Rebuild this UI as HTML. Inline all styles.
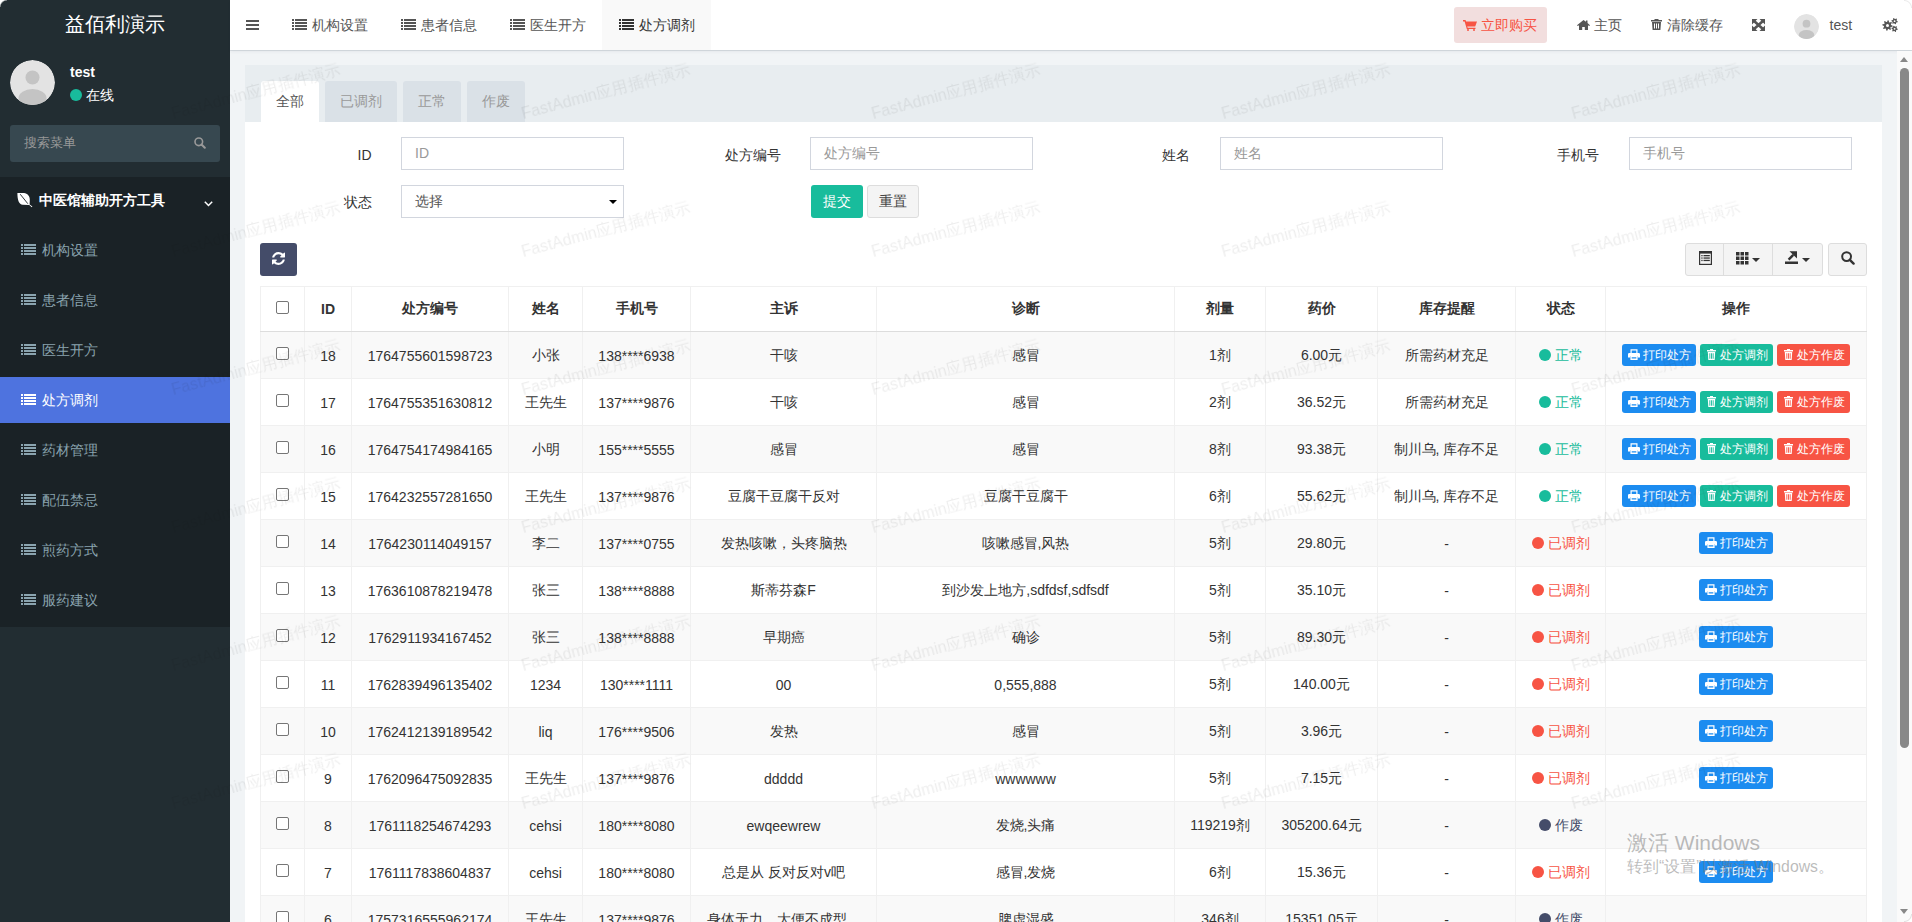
<!DOCTYPE html><html><head><meta charset="utf-8"><style>
*{box-sizing:border-box;margin:0;padding:0}
html,body{width:1912px;height:922px;overflow:hidden;background:#f1f4f6;font-family:"Liberation Sans",sans-serif;font-size:14px;color:#333}
div,span{position:absolute}
.il{position:relative;display:inline-block}
#side{left:0;top:0;width:230px;height:922px;background:#222d32}
#logo{left:0;top:0;width:230px;height:50px;color:#fff;font-size:20px;text-align:center;line-height:48px}
#menu{left:0;top:177px;width:230px;height:450px;background:#1a2226}
.mi{left:0;width:230px;height:46px;line-height:46px;color:#8aa4af;padding-left:42px;font-size:14px}
.mi.act{background:#4e73df;color:#fff}
.mi svg{position:absolute;left:21px;top:17px}
#hdr{left:230px;top:0;width:1682px;height:50px;background:#fff;box-shadow:0 1px 0 rgba(0,25,50,.1),0 2px 3px rgba(0,25,50,.05)}
.tab{top:0;height:50px;line-height:50px;color:#555;font-size:14px;white-space:nowrap}
.tab svg{position:absolute;top:19px;left:17px}
#scroll{left:1897px;top:51px;width:15px;height:871px;background:#fafafa}
.ph{left:245px;top:65px;width:1637px;height:57px;background:#e8edf0}
.pb{left:245px;top:122px;width:1637px;height:800px;background:#fff}
.ptab{top:81px;height:41px;line-height:41px;text-align:center;font-size:14px;border-radius:3px 3px 0 0;background:#dae1e7;color:#999}
.ptab.act{background:#fff;color:#555}
.lbl{font-size:14px;color:#333;text-align:right;line-height:20px;white-space:nowrap}
.inp{height:33px;width:223px;border:1px solid #d2d6de;background:#fff;font-size:14px;color:#999;line-height:31px;padding-left:13px;white-space:nowrap}
.btn{border-radius:3px;text-align:center;font-size:14px}
.tbg{background:#f4f4f4;border:1px solid #ddd;border-radius:3px}
.tbsep{width:1px;height:33px;background:#ddd}
table{position:absolute;left:260px;top:286px;border-collapse:collapse;table-layout:fixed;width:1606px;font-size:14px;color:#333}
th,td{border:1px solid #f0f0f0;text-align:center;white-space:nowrap;overflow:hidden;padding:0}
th{height:45px;font-weight:bold;border-bottom:1px solid #ddd;background:#fff;color:#333}
td{height:47px;padding-top:1px}
tbody tr:nth-child(odd) td{background:#f9f9f9}
tbody tr:nth-child(even) td{background:#fff}
td span,th span{position:relative}
.cb{display:inline-block;width:13px;height:13px;border:1px solid #767676;border-radius:2px;background:#fff;vertical-align:middle;position:relative;top:-3px}
.st{display:inline-block;width:12px;height:12px;border-radius:6px;vertical-align:middle;position:relative;top:-1px;margin-right:4px}
.stt{position:relative;top:0}
.bx{display:inline-block;position:relative;top:-1px;height:22px;line-height:20px;font-size:12px;color:#fff;border-radius:3px;padding:1px 0 1px 6px;vertical-align:middle;margin:0 2px;text-align:left}
.bx svg{vertical-align:middle;position:relative;top:-1px;margin-right:3px}
.bp{width:74px}.bt{width:73px;padding-left:6.5px}.bt svg{margin-right:4px}
.info{background:#1c8cf0}
.succ{background:#18bc9c}
.dang{background:#f75444}
.wm{font-size:16px;color:rgba(0,0,0,.07);will-change:transform;letter-spacing:.1px;transform-origin:0 100%;transform:rotate(-15deg);white-space:nowrap;line-height:16px;pointer-events:none}
.caret{width:0;height:0;border-left:4px solid transparent;border-right:4px solid transparent;border-top:4px solid #000}
</style></head><body><div class="ph"></div><div class="pb"></div>
<div class="ptab act" style="left:261px;width:58px">全部</div>
<div class="ptab" style="left:325px;width:72px">已调剂</div>
<div class="ptab" style="left:403px;width:58px">正常</div>
<div class="ptab" style="left:467px;width:58px">作废</div>
<div class="lbl" style="left:160.00px;width:211.50px;top:145px">ID</div>
<div class="inp" style="left:401.00px;top:137px">ID</div>
<div class="lbl" style="left:569.25px;width:211.50px;top:145px">处方编号</div>
<div class="inp" style="left:810.25px;top:137px">处方编号</div>
<div class="lbl" style="left:978.50px;width:211.50px;top:145px">姓名</div>
<div class="inp" style="left:1219.50px;top:137px">姓名</div>
<div class="lbl" style="left:1387.75px;width:211.50px;top:145px">手机号</div>
<div class="inp" style="left:1628.75px;top:137px">手机号</div>
<div class="lbl" style="left:160px;width:211.5px;top:192px">状态</div>
<div class="inp" style="left:401px;top:185px;color:#555">选择<span class="caret" style="left:207px;top:14px"></span></div>
<div class="btn" style="left:811px;top:185px;width:52px;height:33px;line-height:33px;background:#18bc9c;color:#fff">提交</div>
<div class="btn" style="left:867px;top:185px;width:52px;height:33px;line-height:31px;background:#f4f4f4;border:1px solid #ddd;color:#444">重置</div>
<div class="btn" style="left:260px;top:243px;width:37px;height:33px;background:#444c69"><span style="left:12px;top:9px;line-height:0"><svg width="13" height="13" viewBox="0 0 1536 1536"><path fill="#fff" d="M1511 928q0 5-1 7-64 268-268 434.5T764 1536q-146 0-282.5-55T238 1324l-129 128q-19 19-45 19t-45-19-19-45V959q0-26 19-45t45-19h448q26 0 45 19t19 45-19 45l-137 137q71 66 161 102t187 36q134 0 250-65t186-179q11-17 53-117 8-23 30-23h192q13 0 22.5 9.5t9.5 22.5zm25-800v448q0 26-19 45t-45 19h-448q-26 0-45-19t-19-45 19-45l138-138Q969 256 768 256q-134 0-250 65T332 500q-11 17-53 117-8 23-30 23H50q-13 0-22.5-9.5T18 608v-7q65-268 270-434.5T768 0q146 0 284 55.5T1297 212l130-129q19-19 45-19t45 19 19 45z"/></svg></span></div>
<div class="tbg" style="left:1685px;top:243px;width:138px;height:33px"></div>
<div class="tbsep" style="left:1723px;top:243px"></div><div class="tbsep" style="left:1772px;top:243px"></div>
<div class="tbg" style="left:1828px;top:243px;width:39px;height:33px"></div>
<span style="left:1698.5px;top:250.5px;line-height:0"><svg width="13" height="14" viewBox="0 0 13 14"><rect x="0.6" y="0.6" width="11.8" height="12.8" fill="none" stroke="#333" stroke-width="1.2"/><rect x="0.6" y="0.6" width="11.8" height="2" fill="#333"/><g fill="#333"><rect x="2.3" y="4" width="1.3" height="1.3"/><rect x="4.5" y="4" width="6.3" height="1.3"/><rect x="2.3" y="6.4" width="1.3" height="1.3"/><rect x="4.5" y="6.4" width="6.3" height="1.3"/><rect x="2.3" y="8.8" width="1.3" height="1.3"/><rect x="4.5" y="8.8" width="6.3" height="1.3"/></g></svg></span>
<span style="left:1736px;top:252px;line-height:0"><svg width="13" height="13" viewBox="0 0 13 13"><g fill="#333"><rect x="0.0" y="0.0" width="3.5" height="3.5"/><rect x="0.0" y="4.5" width="3.5" height="3.5"/><rect x="0.0" y="9.0" width="3.5" height="3.5"/><rect x="4.5" y="0.0" width="3.5" height="3.5"/><rect x="4.5" y="4.5" width="3.5" height="3.5"/><rect x="4.5" y="9.0" width="3.5" height="3.5"/><rect x="9.0" y="0.0" width="3.5" height="3.5"/><rect x="9.0" y="4.5" width="3.5" height="3.5"/><rect x="9.0" y="9.0" width="3.5" height="3.5"/></g></svg></span>
<span class="caret" style="left:1752px;top:258px;border-top-color:#333"></span>
<span style="left:1785px;top:251px;line-height:0"><svg width="13" height="13" viewBox="0 0 13 13"><rect x="0" y="10.5" width="13" height="2.5" fill="#333"/><path d="M4.5 0.3H12V7.5z" fill="#333"/><path d="M3.6 8.6L8.3 3.9" stroke="#333" stroke-width="2.4"/></svg></span>
<span class="caret" style="left:1802px;top:258px;border-top-color:#333"></span>
<span style="left:1841px;top:251px;line-height:0"><svg width="14" height="14" viewBox="0 0 14 14"><circle cx="5.6" cy="5.6" r="4.4" fill="none" stroke="#333" stroke-width="2"/><path d="M8.8 8.8l3.8 3.8" stroke="#333" stroke-width="2.4" stroke-linecap="round"/></svg></span>
<table><colgroup><col style="width:44px"><col style="width:47px"><col style="width:157px"><col style="width:74px"><col style="width:108px"><col style="width:186px"><col style="width:298px"><col style="width:91px"><col style="width:112px"><col style="width:138px"><col style="width:90px"><col style="width:261px"></colgroup><thead><tr><th><span class="cb"></span></th><th>ID</th><th>处方编号</th><th>姓名</th><th>手机号</th><th>主诉</th><th>诊断</th><th>剂量</th><th>药价</th><th>库存提醒</th><th>状态</th><th>操作</th></tr></thead><tbody>
<tr><td><span class="cb"></span></td><td>18</td><td>1764755601598723</td><td>小张</td><td>138****6938</td><td>干咳</td><td>感冒</td><td>1剂</td><td>6.00元</td><td>所需药材充足</td><td><span class="st" style="background:#18bc9c"></span><span class="stt" style="color:#18bc9c">正常</span></td><td><span class="bx bp info"><svg width="12" height="11" viewBox="0 0 12 11"><path fill="#fff" d="M2.5 0.3h7v3.7H8.3V1.5H3.7V4H2.5z"/><path fill="#fff" d="M1.2 4h9.6a1.2 1.2 0 0 1 1.2 1.2V8.6H9.6V7H2.4v1.6H0V5.2A1.2 1.2 0 0 1 1.2 4z"/><path fill="#fff" fill-rule="evenodd" d="M2.4 6.8h7.2V11H2.4z M3.7 8.3v1.3h4.6V8.3z"/></svg>打印处方</span><span class="bx bt succ"><svg width="9" height="11" viewBox="0 0 9 11"><path fill="#fff" d="M3 0h3v1h3v1.5H0V1h3z M0.8 3h7.4l-.5 8H1.3z"/><path fill="#18bc9c" d="M2.4 4.2h.9v5.6h-.9z M4.05 4.2h.9v5.6h-.9z M5.7 4.2h.9v5.6h-.9z" class="tl"/></svg>处方调剂</span><span class="bx bt dang"><svg width="9" height="11" viewBox="0 0 9 11"><path fill="#fff" d="M3 0h3v1h3v1.5H0V1h3z M0.8 3h7.4l-.5 8H1.3z"/><path fill="#f75444" d="M2.4 4.2h.9v5.6h-.9z M4.05 4.2h.9v5.6h-.9z M5.7 4.2h.9v5.6h-.9z" class="tl"/></svg>处方作废</span></td></tr>
<tr><td><span class="cb"></span></td><td>17</td><td>1764755351630812</td><td>王先生</td><td>137****9876</td><td>干咳</td><td>感冒</td><td>2剂</td><td>36.52元</td><td>所需药材充足</td><td><span class="st" style="background:#18bc9c"></span><span class="stt" style="color:#18bc9c">正常</span></td><td><span class="bx bp info"><svg width="12" height="11" viewBox="0 0 12 11"><path fill="#fff" d="M2.5 0.3h7v3.7H8.3V1.5H3.7V4H2.5z"/><path fill="#fff" d="M1.2 4h9.6a1.2 1.2 0 0 1 1.2 1.2V8.6H9.6V7H2.4v1.6H0V5.2A1.2 1.2 0 0 1 1.2 4z"/><path fill="#fff" fill-rule="evenodd" d="M2.4 6.8h7.2V11H2.4z M3.7 8.3v1.3h4.6V8.3z"/></svg>打印处方</span><span class="bx bt succ"><svg width="9" height="11" viewBox="0 0 9 11"><path fill="#fff" d="M3 0h3v1h3v1.5H0V1h3z M0.8 3h7.4l-.5 8H1.3z"/><path fill="#18bc9c" d="M2.4 4.2h.9v5.6h-.9z M4.05 4.2h.9v5.6h-.9z M5.7 4.2h.9v5.6h-.9z" class="tl"/></svg>处方调剂</span><span class="bx bt dang"><svg width="9" height="11" viewBox="0 0 9 11"><path fill="#fff" d="M3 0h3v1h3v1.5H0V1h3z M0.8 3h7.4l-.5 8H1.3z"/><path fill="#f75444" d="M2.4 4.2h.9v5.6h-.9z M4.05 4.2h.9v5.6h-.9z M5.7 4.2h.9v5.6h-.9z" class="tl"/></svg>处方作废</span></td></tr>
<tr><td><span class="cb"></span></td><td>16</td><td>1764754174984165</td><td>小明</td><td>155****5555</td><td>感冒</td><td>感冒</td><td>8剂</td><td>93.38元</td><td>制川乌, 库存不足</td><td><span class="st" style="background:#18bc9c"></span><span class="stt" style="color:#18bc9c">正常</span></td><td><span class="bx bp info"><svg width="12" height="11" viewBox="0 0 12 11"><path fill="#fff" d="M2.5 0.3h7v3.7H8.3V1.5H3.7V4H2.5z"/><path fill="#fff" d="M1.2 4h9.6a1.2 1.2 0 0 1 1.2 1.2V8.6H9.6V7H2.4v1.6H0V5.2A1.2 1.2 0 0 1 1.2 4z"/><path fill="#fff" fill-rule="evenodd" d="M2.4 6.8h7.2V11H2.4z M3.7 8.3v1.3h4.6V8.3z"/></svg>打印处方</span><span class="bx bt succ"><svg width="9" height="11" viewBox="0 0 9 11"><path fill="#fff" d="M3 0h3v1h3v1.5H0V1h3z M0.8 3h7.4l-.5 8H1.3z"/><path fill="#18bc9c" d="M2.4 4.2h.9v5.6h-.9z M4.05 4.2h.9v5.6h-.9z M5.7 4.2h.9v5.6h-.9z" class="tl"/></svg>处方调剂</span><span class="bx bt dang"><svg width="9" height="11" viewBox="0 0 9 11"><path fill="#fff" d="M3 0h3v1h3v1.5H0V1h3z M0.8 3h7.4l-.5 8H1.3z"/><path fill="#f75444" d="M2.4 4.2h.9v5.6h-.9z M4.05 4.2h.9v5.6h-.9z M5.7 4.2h.9v5.6h-.9z" class="tl"/></svg>处方作废</span></td></tr>
<tr><td><span class="cb"></span></td><td>15</td><td>1764232557281650</td><td>王先生</td><td>137****9876</td><td>豆腐干豆腐干反对</td><td>豆腐干豆腐干</td><td>6剂</td><td>55.62元</td><td>制川乌, 库存不足</td><td><span class="st" style="background:#18bc9c"></span><span class="stt" style="color:#18bc9c">正常</span></td><td><span class="bx bp info"><svg width="12" height="11" viewBox="0 0 12 11"><path fill="#fff" d="M2.5 0.3h7v3.7H8.3V1.5H3.7V4H2.5z"/><path fill="#fff" d="M1.2 4h9.6a1.2 1.2 0 0 1 1.2 1.2V8.6H9.6V7H2.4v1.6H0V5.2A1.2 1.2 0 0 1 1.2 4z"/><path fill="#fff" fill-rule="evenodd" d="M2.4 6.8h7.2V11H2.4z M3.7 8.3v1.3h4.6V8.3z"/></svg>打印处方</span><span class="bx bt succ"><svg width="9" height="11" viewBox="0 0 9 11"><path fill="#fff" d="M3 0h3v1h3v1.5H0V1h3z M0.8 3h7.4l-.5 8H1.3z"/><path fill="#18bc9c" d="M2.4 4.2h.9v5.6h-.9z M4.05 4.2h.9v5.6h-.9z M5.7 4.2h.9v5.6h-.9z" class="tl"/></svg>处方调剂</span><span class="bx bt dang"><svg width="9" height="11" viewBox="0 0 9 11"><path fill="#fff" d="M3 0h3v1h3v1.5H0V1h3z M0.8 3h7.4l-.5 8H1.3z"/><path fill="#f75444" d="M2.4 4.2h.9v5.6h-.9z M4.05 4.2h.9v5.6h-.9z M5.7 4.2h.9v5.6h-.9z" class="tl"/></svg>处方作废</span></td></tr>
<tr><td><span class="cb"></span></td><td>14</td><td>1764230114049157</td><td>李二</td><td>137****0755</td><td>发热咳嗽，头疼脑热</td><td>咳嗽感冒,风热</td><td>5剂</td><td>29.80元</td><td>-</td><td><span class="st" style="background:#f75444"></span><span class="stt" style="color:#f75444">已调剂</span></td><td><span class="bx bp info"><svg width="12" height="11" viewBox="0 0 12 11"><path fill="#fff" d="M2.5 0.3h7v3.7H8.3V1.5H3.7V4H2.5z"/><path fill="#fff" d="M1.2 4h9.6a1.2 1.2 0 0 1 1.2 1.2V8.6H9.6V7H2.4v1.6H0V5.2A1.2 1.2 0 0 1 1.2 4z"/><path fill="#fff" fill-rule="evenodd" d="M2.4 6.8h7.2V11H2.4z M3.7 8.3v1.3h4.6V8.3z"/></svg>打印处方</span></td></tr>
<tr><td><span class="cb"></span></td><td>13</td><td>1763610878219478</td><td>张三</td><td>138****8888</td><td>斯蒂芬森F</td><td>到沙发上地方,sdfdsf,sdfsdf</td><td>5剂</td><td>35.10元</td><td>-</td><td><span class="st" style="background:#f75444"></span><span class="stt" style="color:#f75444">已调剂</span></td><td><span class="bx bp info"><svg width="12" height="11" viewBox="0 0 12 11"><path fill="#fff" d="M2.5 0.3h7v3.7H8.3V1.5H3.7V4H2.5z"/><path fill="#fff" d="M1.2 4h9.6a1.2 1.2 0 0 1 1.2 1.2V8.6H9.6V7H2.4v1.6H0V5.2A1.2 1.2 0 0 1 1.2 4z"/><path fill="#fff" fill-rule="evenodd" d="M2.4 6.8h7.2V11H2.4z M3.7 8.3v1.3h4.6V8.3z"/></svg>打印处方</span></td></tr>
<tr><td><span class="cb"></span></td><td>12</td><td>1762911934167452</td><td>张三</td><td>138****8888</td><td>早期癌</td><td>确诊</td><td>5剂</td><td>89.30元</td><td>-</td><td><span class="st" style="background:#f75444"></span><span class="stt" style="color:#f75444">已调剂</span></td><td><span class="bx bp info"><svg width="12" height="11" viewBox="0 0 12 11"><path fill="#fff" d="M2.5 0.3h7v3.7H8.3V1.5H3.7V4H2.5z"/><path fill="#fff" d="M1.2 4h9.6a1.2 1.2 0 0 1 1.2 1.2V8.6H9.6V7H2.4v1.6H0V5.2A1.2 1.2 0 0 1 1.2 4z"/><path fill="#fff" fill-rule="evenodd" d="M2.4 6.8h7.2V11H2.4z M3.7 8.3v1.3h4.6V8.3z"/></svg>打印处方</span></td></tr>
<tr><td><span class="cb"></span></td><td>11</td><td>1762839496135402</td><td>1234</td><td>130****1111</td><td>00</td><td>0,555,888</td><td>5剂</td><td>140.00元</td><td>-</td><td><span class="st" style="background:#f75444"></span><span class="stt" style="color:#f75444">已调剂</span></td><td><span class="bx bp info"><svg width="12" height="11" viewBox="0 0 12 11"><path fill="#fff" d="M2.5 0.3h7v3.7H8.3V1.5H3.7V4H2.5z"/><path fill="#fff" d="M1.2 4h9.6a1.2 1.2 0 0 1 1.2 1.2V8.6H9.6V7H2.4v1.6H0V5.2A1.2 1.2 0 0 1 1.2 4z"/><path fill="#fff" fill-rule="evenodd" d="M2.4 6.8h7.2V11H2.4z M3.7 8.3v1.3h4.6V8.3z"/></svg>打印处方</span></td></tr>
<tr><td><span class="cb"></span></td><td>10</td><td>1762412139189542</td><td>liq</td><td>176****9506</td><td>发热</td><td>感冒</td><td>5剂</td><td>3.96元</td><td>-</td><td><span class="st" style="background:#f75444"></span><span class="stt" style="color:#f75444">已调剂</span></td><td><span class="bx bp info"><svg width="12" height="11" viewBox="0 0 12 11"><path fill="#fff" d="M2.5 0.3h7v3.7H8.3V1.5H3.7V4H2.5z"/><path fill="#fff" d="M1.2 4h9.6a1.2 1.2 0 0 1 1.2 1.2V8.6H9.6V7H2.4v1.6H0V5.2A1.2 1.2 0 0 1 1.2 4z"/><path fill="#fff" fill-rule="evenodd" d="M2.4 6.8h7.2V11H2.4z M3.7 8.3v1.3h4.6V8.3z"/></svg>打印处方</span></td></tr>
<tr><td><span class="cb"></span></td><td>9</td><td>1762096475092835</td><td>王先生</td><td>137****9876</td><td>ddddd</td><td>wwwwww</td><td>5剂</td><td>7.15元</td><td>-</td><td><span class="st" style="background:#f75444"></span><span class="stt" style="color:#f75444">已调剂</span></td><td><span class="bx bp info"><svg width="12" height="11" viewBox="0 0 12 11"><path fill="#fff" d="M2.5 0.3h7v3.7H8.3V1.5H3.7V4H2.5z"/><path fill="#fff" d="M1.2 4h9.6a1.2 1.2 0 0 1 1.2 1.2V8.6H9.6V7H2.4v1.6H0V5.2A1.2 1.2 0 0 1 1.2 4z"/><path fill="#fff" fill-rule="evenodd" d="M2.4 6.8h7.2V11H2.4z M3.7 8.3v1.3h4.6V8.3z"/></svg>打印处方</span></td></tr>
<tr><td><span class="cb"></span></td><td>8</td><td>1761118254674293</td><td>cehsi</td><td>180****8080</td><td>ewqeewrew</td><td>发烧,头痛</td><td>119219剂</td><td>305200.64元</td><td>-</td><td><span class="st" style="background:#444c69"></span><span class="stt" style="color:#444c69">作废</span></td><td></td></tr>
<tr><td><span class="cb"></span></td><td>7</td><td>1761117838604837</td><td>cehsi</td><td>180****8080</td><td>总是从 反对反对v吧</td><td>感冒,发烧</td><td>6剂</td><td>15.36元</td><td>-</td><td><span class="st" style="background:#f75444"></span><span class="stt" style="color:#f75444">已调剂</span></td><td><span class="bx bp info"><svg width="12" height="11" viewBox="0 0 12 11"><path fill="#fff" d="M2.5 0.3h7v3.7H8.3V1.5H3.7V4H2.5z"/><path fill="#fff" d="M1.2 4h9.6a1.2 1.2 0 0 1 1.2 1.2V8.6H9.6V7H2.4v1.6H0V5.2A1.2 1.2 0 0 1 1.2 4z"/><path fill="#fff" fill-rule="evenodd" d="M2.4 6.8h7.2V11H2.4z M3.7 8.3v1.3h4.6V8.3z"/></svg>打印处方</span></td></tr>
<tr><td><span class="cb"></span></td><td>6</td><td>1757316555962174</td><td>王先生</td><td>137****9876</td><td>身体无力，大便不成型。</td><td>脾虚湿盛</td><td>346剂</td><td>15351.05元</td><td>-</td><td><span class="st" style="background:#444c69"></span><span class="stt" style="color:#444c69">作废</span></td><td></td></tr>
</tbody></table>
<div style="left:1627px;top:831px;font-size:21px;color:rgba(120,120,120,.5);white-space:nowrap;line-height:24px">激活 Windows</div>
<div style="left:1627px;top:858px;font-size:15.8px;color:rgba(120,120,120,.5);white-space:nowrap;line-height:18px">转到“设置”以激活 Windows。</div>
<div id="side"><div id="logo">益佰利演示</div><span style="left:10px;top:60px;line-height:0;border-radius:50%;overflow:hidden;width:45px;height:45px"><svg width="45" height="45" viewBox="0 0 45 45"><circle cx="22.5" cy="22.5" r="22.5" fill="#e3e3e3"/><circle cx="22.5" cy="17.5" r="7" fill="#c4c4c4"/><ellipse cx="22.5" cy="38" rx="14" ry="9" fill="#c4c4c4"/></svg></span><div style="left:70px;top:63px;color:#fff;font-weight:bold;font-size:14px;line-height:18px">test</div><span style="left:70px;top:89px;width:12px;height:12px;border-radius:6px;background:#18bc9c"></span><div style="left:86px;top:86px;color:#fff;font-size:14px;line-height:18px">在线</div><div style="left:10px;top:125px;width:210px;height:37px;background:#374850;border-radius:3px"></div><div style="left:24px;top:134px;color:#999;font-size:13px;line-height:18px">搜索菜单</div><span style="left:194px;top:137px;line-height:0"><svg width="12" height="12" viewBox="0 0 12 12"><circle cx="4.8" cy="4.8" r="3.8" fill="none" stroke="#999" stroke-width="1.6"/><path d="M7.5 7.5l3.3 3.3" stroke="#999" stroke-width="2" stroke-linecap="round"/></svg></span><div id="menu"><div style="left:39px;top:14px;color:#fff;font-weight:bold;font-size:14px;line-height:18px;white-space:nowrap">中医馆辅助开方工具</div><span style="left:17px;top:15px;line-height:0"><svg width="16" height="16" viewBox="0 0 16 16"><path fill="#fff" d="M0.4 0.9L7 1C10.5 1.5 12.8 4 12.8 7.5L12.6 12.4L15.4 14.6L14.8 15.3L12.2 13L5.7 12.7C2 12.5 0.4 8 0.4 0.9z"/><path d="M3.2 2.2L10.8 11.7" stroke="#1a2226" stroke-width="0.9"/></svg></span><span style="left:204px;top:24px;line-height:0"><svg width="9" height="6" viewBox="0 0 9 6"><path d="M.8 .8l3.7 3.7 3.7-3.7" fill="none" stroke="#fff" stroke-width="1.5"/></svg></span><div class="mi" style="top:50px"><svg width="15" height="11" viewBox="0 0 15 11"><g fill="#8aa4af"><rect x="0" y="0" width="2" height="2"/><rect x="3" y="0" width="12" height="2"/><rect x="0" y="3" width="2" height="2"/><rect x="3" y="3" width="12" height="2"/><rect x="0" y="6" width="2" height="2"/><rect x="3" y="6" width="12" height="2"/><rect x="0" y="9" width="2" height="2"/><rect x="3" y="9" width="12" height="2"/></g></svg>机构设置</div><div class="mi" style="top:100px"><svg width="15" height="11" viewBox="0 0 15 11"><g fill="#8aa4af"><rect x="0" y="0" width="2" height="2"/><rect x="3" y="0" width="12" height="2"/><rect x="0" y="3" width="2" height="2"/><rect x="3" y="3" width="12" height="2"/><rect x="0" y="6" width="2" height="2"/><rect x="3" y="6" width="12" height="2"/><rect x="0" y="9" width="2" height="2"/><rect x="3" y="9" width="12" height="2"/></g></svg>患者信息</div><div class="mi" style="top:150px"><svg width="15" height="11" viewBox="0 0 15 11"><g fill="#8aa4af"><rect x="0" y="0" width="2" height="2"/><rect x="3" y="0" width="12" height="2"/><rect x="0" y="3" width="2" height="2"/><rect x="3" y="3" width="12" height="2"/><rect x="0" y="6" width="2" height="2"/><rect x="3" y="6" width="12" height="2"/><rect x="0" y="9" width="2" height="2"/><rect x="3" y="9" width="12" height="2"/></g></svg>医生开方</div><div class="mi act" style="top:200px"><svg width="15" height="11" viewBox="0 0 15 11"><g fill="#fff"><rect x="0" y="0" width="2" height="2"/><rect x="3" y="0" width="12" height="2"/><rect x="0" y="3" width="2" height="2"/><rect x="3" y="3" width="12" height="2"/><rect x="0" y="6" width="2" height="2"/><rect x="3" y="6" width="12" height="2"/><rect x="0" y="9" width="2" height="2"/><rect x="3" y="9" width="12" height="2"/></g></svg>处方调剂</div><div class="mi" style="top:250px"><svg width="15" height="11" viewBox="0 0 15 11"><g fill="#8aa4af"><rect x="0" y="0" width="2" height="2"/><rect x="3" y="0" width="12" height="2"/><rect x="0" y="3" width="2" height="2"/><rect x="3" y="3" width="12" height="2"/><rect x="0" y="6" width="2" height="2"/><rect x="3" y="6" width="12" height="2"/><rect x="0" y="9" width="2" height="2"/><rect x="3" y="9" width="12" height="2"/></g></svg>药材管理</div><div class="mi" style="top:300px"><svg width="15" height="11" viewBox="0 0 15 11"><g fill="#8aa4af"><rect x="0" y="0" width="2" height="2"/><rect x="3" y="0" width="12" height="2"/><rect x="0" y="3" width="2" height="2"/><rect x="3" y="3" width="12" height="2"/><rect x="0" y="6" width="2" height="2"/><rect x="3" y="6" width="12" height="2"/><rect x="0" y="9" width="2" height="2"/><rect x="3" y="9" width="12" height="2"/></g></svg>配伍禁忌</div><div class="mi" style="top:350px"><svg width="15" height="11" viewBox="0 0 15 11"><g fill="#8aa4af"><rect x="0" y="0" width="2" height="2"/><rect x="3" y="0" width="12" height="2"/><rect x="0" y="3" width="2" height="2"/><rect x="3" y="3" width="12" height="2"/><rect x="0" y="6" width="2" height="2"/><rect x="3" y="6" width="12" height="2"/><rect x="0" y="9" width="2" height="2"/><rect x="3" y="9" width="12" height="2"/></g></svg>煎药方式</div><div class="mi" style="top:400px"><svg width="15" height="11" viewBox="0 0 15 11"><g fill="#8aa4af"><rect x="0" y="0" width="2" height="2"/><rect x="3" y="0" width="12" height="2"/><rect x="0" y="3" width="2" height="2"/><rect x="3" y="3" width="12" height="2"/><rect x="0" y="6" width="2" height="2"/><rect x="3" y="6" width="12" height="2"/><rect x="0" y="9" width="2" height="2"/><rect x="3" y="9" width="12" height="2"/></g></svg>服药建议</div></div></div>
<div id="hdr"><span style="left:16px;top:20px;line-height:0"><svg width="13" height="10" viewBox="0 0 13 10"><g fill="#555"><rect y="0" width="13" height="2"/><rect y="4" width="13" height="2"/><rect y="8" width="13" height="2"/></g></svg></span><div class="tab" style="left:45px;width:109px;color:#555"><svg width="15" height="11" viewBox="0 0 15 11"><g fill="#555"><rect x="0" y="0" width="2" height="2"/><rect x="3" y="0" width="12" height="2"/><rect x="0" y="3" width="2" height="2"/><rect x="3" y="3" width="12" height="2"/><rect x="0" y="6" width="2" height="2"/><rect x="3" y="6" width="12" height="2"/><rect x="0" y="9" width="2" height="2"/><rect x="3" y="9" width="12" height="2"/></g></svg><span style="left:37px;top:0">机构设置</span></div><div class="tab" style="left:154px;width:109px;color:#555"><svg width="15" height="11" viewBox="0 0 15 11"><g fill="#555"><rect x="0" y="0" width="2" height="2"/><rect x="3" y="0" width="12" height="2"/><rect x="0" y="3" width="2" height="2"/><rect x="3" y="3" width="12" height="2"/><rect x="0" y="6" width="2" height="2"/><rect x="3" y="6" width="12" height="2"/><rect x="0" y="9" width="2" height="2"/><rect x="3" y="9" width="12" height="2"/></g></svg><span style="left:37px;top:0">患者信息</span></div><div class="tab" style="left:263px;width:109px;color:#555"><svg width="15" height="11" viewBox="0 0 15 11"><g fill="#555"><rect x="0" y="0" width="2" height="2"/><rect x="3" y="0" width="12" height="2"/><rect x="0" y="3" width="2" height="2"/><rect x="3" y="3" width="12" height="2"/><rect x="0" y="6" width="2" height="2"/><rect x="3" y="6" width="12" height="2"/><rect x="0" y="9" width="2" height="2"/><rect x="3" y="9" width="12" height="2"/></g></svg><span style="left:37px;top:0">医生开方</span></div><div class="tab" style="left:372px;width:109px;background:#f9f9f9;color:#333"><svg width="15" height="11" viewBox="0 0 15 11"><g fill="#333"><rect x="0" y="0" width="2" height="2"/><rect x="3" y="0" width="12" height="2"/><rect x="0" y="3" width="2" height="2"/><rect x="3" y="3" width="12" height="2"/><rect x="0" y="6" width="2" height="2"/><rect x="3" y="6" width="12" height="2"/><rect x="0" y="9" width="2" height="2"/><rect x="3" y="9" width="12" height="2"/></g></svg><span style="left:37px;top:0">处方调剂</span></div><div style="left:1224px;top:7px;width:93px;height:36px;background:#f2dede;border-radius:3px"></div><span style="left:1233px;top:20px;line-height:0"><svg width="14" height="11" viewBox="0 0 14 11"><path fill="#f75444" d="M0 0h2.5l.6 1.5H14l-1.8 5H4.2l.5 1.2H12.5V9H3.8L1.6 1.5H0z"/><circle cx="5" cy="10" r="1" fill="#f75444"/><circle cx="11" cy="10" r="1" fill="#f75444"/></svg></span><div style="left:1251px;top:15px;color:#f75444;line-height:20px;white-space:nowrap">立即购买</div><span style="left:1347px;top:20px;line-height:0"><svg width="13" height="10" viewBox="0 0 13 10"><path fill="#555" d="M6.5 0L0 5.2l.8.9L2 5.2V10h3.2V7h2.6v3H11V5.2l1.2.9.8-.9L10.5 3V.5H9V1.8z"/></svg></span><div style="left:1364px;top:15px;color:#555;line-height:20px;white-space:nowrap">主页</div><span style="left:1421px;top:19px;line-height:0"><svg width="11" height="11" viewBox="0 0 11 11"><path fill="#555" d="M3.5 0h4v1H11v1.5H0V1h3.5z M1 3h9l-.6 8H1.6z"/><path fill="#fff" d="M3 4.5h1v5H3z M5 4.5h1v5H5z M7 4.5h1v5H7z"/></svg></span><div style="left:1437px;top:15px;color:#555;line-height:20px;white-space:nowrap">清除缓存</div><span style="left:1522px;top:19px;line-height:0"><svg width="13" height="12" viewBox="0 0 13 12"><g fill="#555"><path d="M0 0h5.5L0 5.5z"/><path d="M13 0v5.5L7.5 0z"/><path d="M0 12V6.5L5.5 12z"/><path d="M13 12H7.5L13 6.5z"/></g><path d="M1.5 1.5L11.5 10.5M11.5 1.5L1.5 10.5" stroke="#555" stroke-width="2.6"/></svg></span><span style="left:1564px;top:14px;line-height:0;width:25px;height:25px;border-radius:50%;overflow:hidden"><svg width="25" height="25" viewBox="0 0 45 45"><circle cx="22.5" cy="22.5" r="22.5" fill="#e3e3e3"/><circle cx="22.5" cy="17.5" r="7" fill="#c4c4c4"/><ellipse cx="22.5" cy="38" rx="14" ry="9" fill="#c4c4c4"/></svg></span><div style="left:1599.5px;top:15px;color:#555;line-height:20px">test</div><span style="left:1651.5px;top:18px;line-height:0"><svg width="16" height="14" viewBox="0 0 16 14"><g fill="#555"><polygon points="10.69,7.76 10.54,8.76 8.75,9.04 8.39,9.64 8.99,11.35 8.17,11.96 6.71,10.89 6.03,11.06 5.24,12.69 4.24,12.54 3.96,10.75 3.36,10.39 1.65,10.99 1.04,10.17 2.11,8.71 1.94,8.03 0.31,7.24 0.46,6.24 2.25,5.96 2.61,5.36 2.01,3.65 2.83,3.04 4.29,4.11 4.97,3.94 5.76,2.31 6.76,2.46 7.04,4.25 7.64,4.61 9.35,4.01 9.96,4.83 8.89,6.29 9.06,6.97"/><circle cx="5.5" cy="7.5" r="1.5" fill="#fff"/><polygon points="15.79,3.41 15.63,4.23 14.43,4.42 14.05,4.85 14.02,6.07 13.22,6.34 12.46,5.40 11.89,5.28 10.82,5.86 10.19,5.31 10.63,4.17 10.44,3.63 9.41,2.99 9.57,2.17 10.77,1.98 11.15,1.55 11.18,0.33 11.98,0.06 12.74,1.00 13.31,1.12 14.38,0.54 15.01,1.09 14.57,2.23 14.76,2.77"/><circle cx="12.6" cy="3.2" r="0.9" fill="#fff"/><polygon points="15.79,11.01 15.63,11.83 14.43,12.02 14.05,12.45 14.02,13.67 13.22,13.94 12.46,13.00 11.89,12.88 10.82,13.46 10.19,12.91 10.63,11.77 10.44,11.23 9.41,10.59 9.57,9.77 10.77,9.58 11.15,9.15 11.18,7.93 11.98,7.66 12.74,8.60 13.31,8.72 14.38,8.14 15.01,8.69 14.57,9.83 14.76,10.37"/><circle cx="12.6" cy="10.8" r="0.9" fill="#fff"/></g></svg></span></div>
<div id="scroll"><span style="left:3px;top:6px;width:0;height:0;border-left:4.5px solid transparent;border-right:4.5px solid transparent;border-bottom:5px solid #888"></span><span style="left:3px;top:17px;width:9px;height:680px;border-radius:4.5px;background:#888"></span><span style="left:3px;top:858px;width:0;height:0;border-left:4.5px solid transparent;border-right:4.5px solid transparent;border-top:5px solid #888"></span></div>
<div class="wm" style="left:-176px;top:105.5px">FastAdmin应用插件演示</div><div class="wm" style="left:174px;top:105.5px">FastAdmin应用插件演示</div><div class="wm" style="left:524px;top:105.5px">FastAdmin应用插件演示</div><div class="wm" style="left:874px;top:105.5px">FastAdmin应用插件演示</div><div class="wm" style="left:1224px;top:105.5px">FastAdmin应用插件演示</div><div class="wm" style="left:1574px;top:105.5px">FastAdmin应用插件演示</div><div class="wm" style="left:-176px;top:243.5px">FastAdmin应用插件演示</div><div class="wm" style="left:174px;top:243.5px">FastAdmin应用插件演示</div><div class="wm" style="left:524px;top:243.5px">FastAdmin应用插件演示</div><div class="wm" style="left:874px;top:243.5px">FastAdmin应用插件演示</div><div class="wm" style="left:1224px;top:243.5px">FastAdmin应用插件演示</div><div class="wm" style="left:1574px;top:243.5px">FastAdmin应用插件演示</div><div class="wm" style="left:-176px;top:381.5px">FastAdmin应用插件演示</div><div class="wm" style="left:174px;top:381.5px">FastAdmin应用插件演示</div><div class="wm" style="left:524px;top:381.5px">FastAdmin应用插件演示</div><div class="wm" style="left:874px;top:381.5px">FastAdmin应用插件演示</div><div class="wm" style="left:1224px;top:381.5px">FastAdmin应用插件演示</div><div class="wm" style="left:1574px;top:381.5px">FastAdmin应用插件演示</div><div class="wm" style="left:-176px;top:519.5px">FastAdmin应用插件演示</div><div class="wm" style="left:174px;top:519.5px">FastAdmin应用插件演示</div><div class="wm" style="left:524px;top:519.5px">FastAdmin应用插件演示</div><div class="wm" style="left:874px;top:519.5px">FastAdmin应用插件演示</div><div class="wm" style="left:1224px;top:519.5px">FastAdmin应用插件演示</div><div class="wm" style="left:1574px;top:519.5px">FastAdmin应用插件演示</div><div class="wm" style="left:-176px;top:657.5px">FastAdmin应用插件演示</div><div class="wm" style="left:174px;top:657.5px">FastAdmin应用插件演示</div><div class="wm" style="left:524px;top:657.5px">FastAdmin应用插件演示</div><div class="wm" style="left:874px;top:657.5px">FastAdmin应用插件演示</div><div class="wm" style="left:1224px;top:657.5px">FastAdmin应用插件演示</div><div class="wm" style="left:1574px;top:657.5px">FastAdmin应用插件演示</div><div class="wm" style="left:-176px;top:795.5px">FastAdmin应用插件演示</div><div class="wm" style="left:174px;top:795.5px">FastAdmin应用插件演示</div><div class="wm" style="left:524px;top:795.5px">FastAdmin应用插件演示</div><div class="wm" style="left:874px;top:795.5px">FastAdmin应用插件演示</div><div class="wm" style="left:1224px;top:795.5px">FastAdmin应用插件演示</div><div class="wm" style="left:1574px;top:795.5px">FastAdmin应用插件演示</div>
<div style="left:1904px;top:914px;width:8px;height:8px;background:radial-gradient(circle at 0 0, rgba(0,0,0,0) 6.5px, rgba(0,0,0,.1) 7.5px, rgba(255,255,255,1) 8.5px)"></div>
<div style="left:1904px;top:0;width:8px;height:8px;background:radial-gradient(circle at 0 8px, rgba(0,0,0,0) 6.5px, rgba(0,0,0,.08) 7.5px, rgba(255,255,255,1) 8.5px)"></div>
<div style="left:0;top:0;width:7px;height:7px;background:radial-gradient(circle at 7px 7px, rgba(255,255,255,0) 6px, #fff 7.5px)"></div></body></html>
